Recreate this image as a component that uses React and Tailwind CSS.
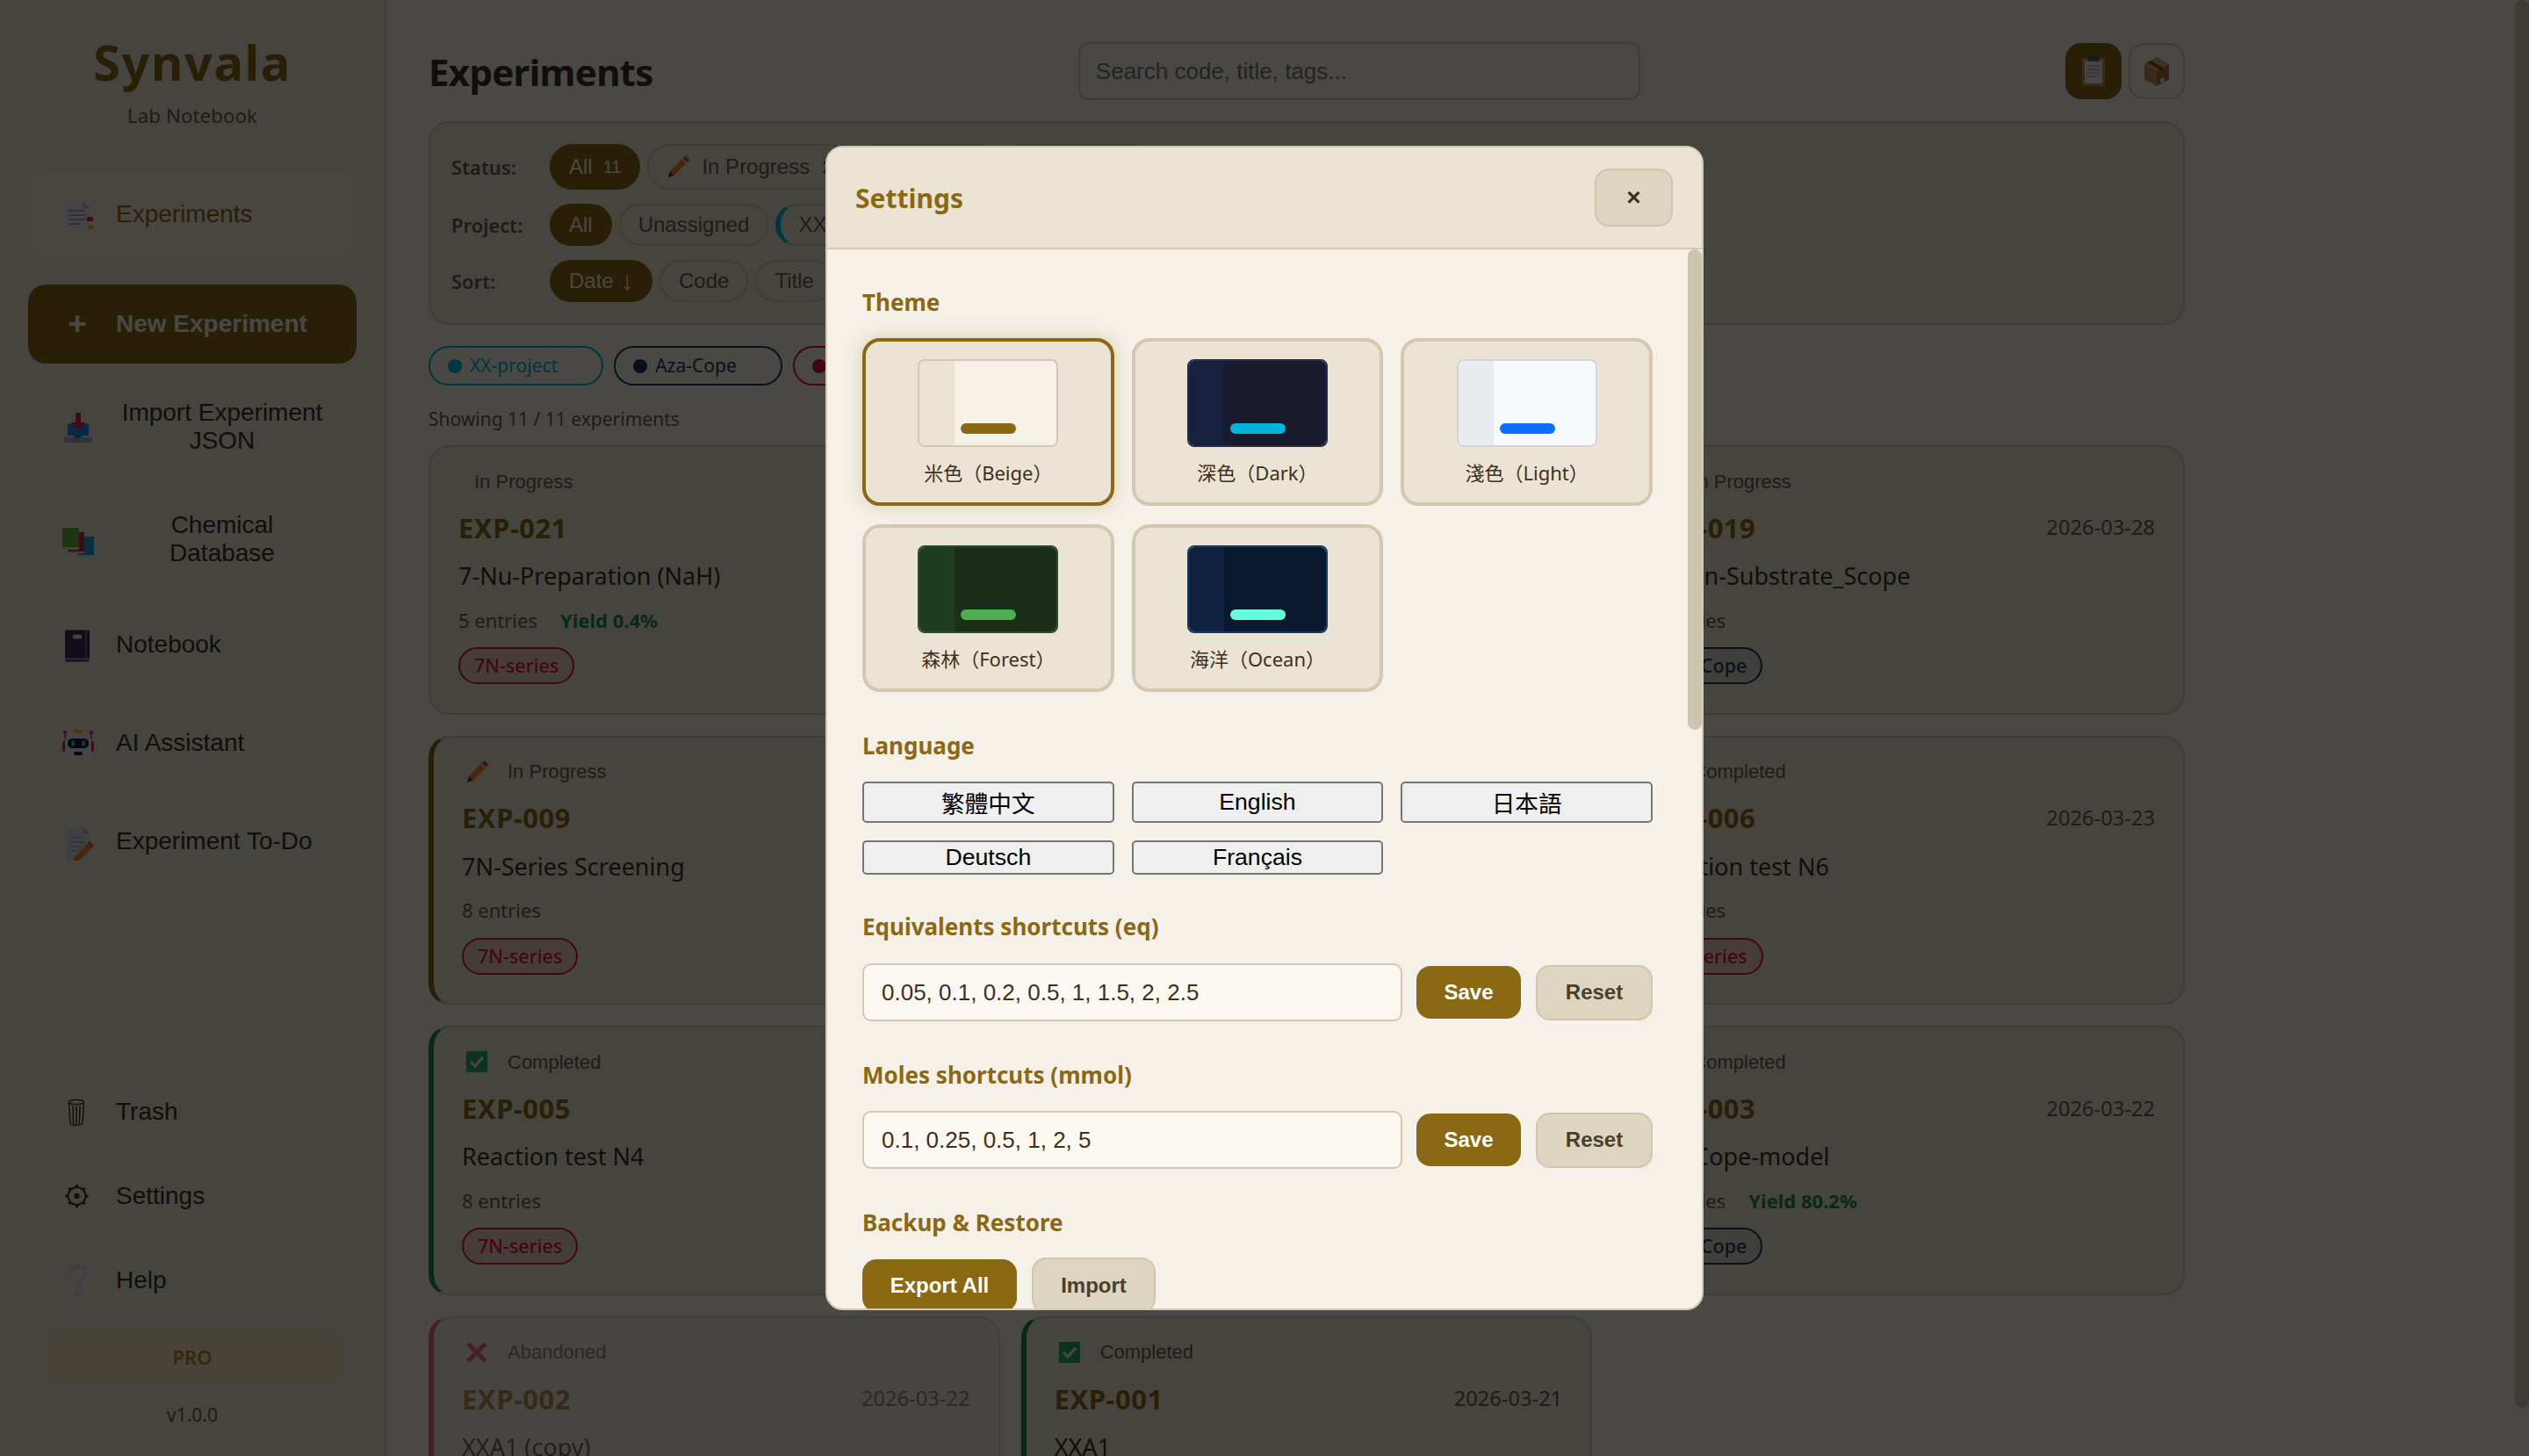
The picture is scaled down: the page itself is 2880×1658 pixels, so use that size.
import React from "react";

const arial = "[font-family:'Liberation_Sans','Noto_Sans_CJK_TC',sans-serif]";

const ExperimentsIcon = () => (
  <svg viewBox="0 0 48 48" className="w-12 h-12">
    <path d="M10 9h20l8 8v27H10z" fill="#e4e1ec" />
    <path d="M30 9l8 8h-8z" fill="#bdb9cc" />
    <path d="M14 20h18M14 25h20M14 30h20M14 35h12" stroke="#a5a2b3" strokeWidth="2" />
    <rect x="35" y="27" width="7" height="5" rx="1" fill="#e8263f" />
    <rect x="36" y="36" width="7" height="5" rx="1" fill="#f5c030" />
  </svg>
);
const ImportIcon = () => (
  <svg viewBox="0 0 48 48" className="w-12 h-12">
    <g transform="translate(1 -2)">
      <path d="M10 22h28l2 4v16a2 2 0 0 1-2 2H10a2 2 0 0 1-2-2V26z" fill="#dedbe6" />
      <path d="M8 38h32v4a2 2 0 0 1-2 2H10a2 2 0 0 1-2-2z" fill="#a9a6b8" />
      <path d="M12 23h24v13h-7l-2 3h-6l-2-3h-7z" fill="#1d8bd8" />
      <path d="M21 10h6v11h6l-9 9-9-9h6z" fill="#e2214a" />
    </g>
  </svg>
);
const BooksIcon = () => (
  <svg viewBox="0 0 48 48" className="w-12 h-12">
    <g transform="translate(-4 1)">
      <rect x="29" y="20" width="18" height="23" fill="#1e9cd8" />
      <rect x="29" y="41" width="18" height="2" fill="#bcd9ec" />
      <rect x="17" y="15" width="19" height="24" fill="#d8204e" />
      <rect x="17" y="37" width="19" height="2" fill="#f0c0cc" />
      <rect x="11" y="10" width="19" height="25" fill="#5cb83c" />
      <rect x="11" y="32" width="19" height="3" fill="#cfe6c4" />
    </g>
  </svg>
);
const NotebookIcon = () => (
  <svg viewBox="0 0 48 48" className="w-12 h-12">
    <g transform="translate(0 1.5)">
      <rect x="10" y="6" width="28" height="36" rx="2" fill="#3b2c55" />
      <rect x="10" y="38" width="28" height="2" fill="#a98cd8" />
      <rect x="33" y="6" width="1.5" height="36" fill="#7a5fa8" />
      <rect x="19" y="11" width="10" height="5" rx="1.5" fill="#dcd8e6" />
    </g>
  </svg>
);
const RobotIcon = () => (
  <svg viewBox="0 0 48 48" className="w-12 h-12">
    <g transform="translate(1 3)">
      <rect x="8.5" y="10" width="1.5" height="22" fill="#e2214a" />
      <rect x="38" y="10" width="1.5" height="22" fill="#e2214a" />
      <circle cx="9" cy="9" r="2" fill="#e2214a" />
      <circle cx="39" cy="9" r="2" fill="#e2214a" />
      <rect x="6" y="19" width="4" height="12" rx="2" fill="#e2214a" />
      <rect x="38" y="19" width="4" height="12" rx="2" fill="#e2214a" />
      <rect x="18" y="6" width="12" height="4" rx="2" fill="#f5c030" />
      <rect x="9" y="10" width="30" height="30" rx="9" fill="#e9e5ef" />
      <rect x="12" y="16" width="24" height="11" rx="5.5" fill="#1a1830" />
      <rect x="16" y="18" width="4" height="7" rx="2" fill="#29b6f6" />
      <rect x="28" y="18" width="4" height="7" rx="2" fill="#29b6f6" />
      <rect x="19" y="31" width="10" height="4" rx="2" fill="#1a1830" />
    </g>
  </svg>
);
const TodoIcon = () => (
  <svg viewBox="0 0 48 48" className="w-12 h-12">
    <g transform="translate(0 2)">
      <path d="M11 6h20l7 7v31H11z" fill="#d6d3de" />
      <path d="M31 6l7 7h-7z" fill="#b3afc0" />
      <path d="M16 18h14M16 23h16M16 28h12M16 33h8" stroke="#a5a2b3" strokeWidth="1.6" />
      <path d="M36 24l5 5-15 15h-7l2-5z" fill="#f08020" />
      <path d="M36 24l2-2 5 5-2 2z" fill="#e8404a" />
    </g>
  </svg>
);
const TrashIcon = () => (
  <svg viewBox="0 0 48 48" className="w-12 h-12" fill="none" stroke="#3d3020" strokeWidth="1.4">
    <ellipse cx="23" cy="13" rx="8.5" ry="2.6" />
    <path d="M14.5 14l1.5 23a7 2.4 0 0 0 14 0l1.5-23" />
    <path d="M19 17l.6 21M23 17.500v21M27 17l-.6 21" />
  </svg>
);
const GearIcon = () => (
  <svg viewBox="0 0 48 48" className="w-12 h-12" fill="none" stroke="#3d3020" strokeWidth="2">
    <circle cx="23.500" cy="24" r="10" />
    <circle cx="23.500" cy="24" r="2.200" fill="#3d3020" />
    <path d="M23.500 11v3M23.500 34v3M10.500 24h3M33.500 24h3M14.300 14.800l2.100 2.100M30.600 31.100l2.100 2.100M14.300 33.200l2.100-2.100M30.600 16.900l2.100-2.100" strokeWidth="3" />
  </svg>
);
const HelpIcon = () => (
  <svg viewBox="0 0 48 48" className="w-12 h-12" fill="none" stroke="#d3cfe8" strokeWidth="5" strokeLinecap="round">
    <path d="M16 14c1-4 4-6 8-6 5 0 9 3 9 8 0 6-8 7-8 14" />
    <circle cx="25" cy="39" r="1.500" fill="#d3cfe8" />
  </svg>
);
const PencilIcon = () => (
  <svg viewBox="0 0 26 26" className="w-[26px] h-[26px] shrink-0">
    <path d="M17.500 4l5 5L8.500 23 2 25l2-6.500z" fill="#f08020" />
    <path d="M18.500 3l2-2a1.500 1.500 0 0 1 2 0l3 3a1.500 1.500 0 0 1 0 2l-2 2z" fill="#e8404a" />
    <path d="M4 18.500L8 22.500 2 25z" fill="#3d3020" />
  </svg>
);
const CheckIcon = () => (
  <svg viewBox="0 0 26 26" className="w-[26px] h-[26px] shrink-0">
    <rect x="1" y="1" width="24" height="24" rx="1" fill="#2aa86b" />
    <path d="M6 13l5 5 9-10" fill="none" stroke="#e8f0ea" strokeWidth="3" />
  </svg>
);
const CrossIcon = () => (
  <svg viewBox="0 0 26 26" className="w-[26px] h-[26px] shrink-0">
    <path d="M3 3l20 20M23 3L3 23" stroke="#e2304f" strokeWidth="5" />
  </svg>
);
const ClipboardIcon = () => (
  <svg viewBox="0 0 32 36" className="w-8 h-9">
    <rect x="3" y="3" width="26" height="32" rx="1" fill="#c98a4e" />
    <rect x="6" y="6" width="20" height="26" fill="#e8e6f0" />
    <rect x="10" y="1" width="12" height="6" rx="1" fill="#55525f" />
    <path d="M9 12h14M9 16h14M9 20h14M9 24h9" stroke="#8d8a9c" strokeWidth="1.200" />
  </svg>
);
const BoxIcon = () => (
  <svg viewBox="0 0 32 36" className="w-8 h-9">
    <path d="M16 2l14 8v17l-14 8-14-8V10z" fill="#c98a4e" />
    <path d="M16 18l14-8v17l-14 8z" fill="#a9692f" />
    <path d="M16 2l14 8-14 8-14-8z" fill="#dca468" />
    <path d="M9 6l14 8v5l-4-2v-1L5 8z" fill="#7a4a20" />
    <rect x="20" y="26" width="5" height="5" fill="#e0d8cc" />
  </svg>
);

const NavItem = ({ icon, label, active }) => (
  <button
    className={`w-[374px] py-6 pl-8 pr-8 rounded-[20px] flex items-center gap-5 text-[28px] leading-8 text-center ${arial} ${
      active ? "bg-[#f3ead6] text-[#8b6914]" : "text-[#3d3020]"
    }`}
  >
    <span className="w-12 h-12 shrink-0">{icon}</span>
    <span>{label}</span>
  </button>
);

const Chip = ({ active, children, className = "", h = "h-12" }) => (
  <button
    className={`${h} shrink-0 px-5 rounded-full border-2 flex items-center text-[24px] ${arial} ${
      active ? "bg-[#8b6914] border-[#8b6914] text-[#f5f0e8]" : "border-[#d4c8b0] text-[#6b5d4a]"
    } ${className}`}
  >
    {children}
  </button>
);

const FilterRow = ({ label, children }) => (
  <div className="flex items-center">
    <span className="w-[112px] shrink-0 text-[22px] font-semibold text-[#6b5d4a]">{label}</span>
    <div className="flex items-center gap-2">{children}</div>
  </div>
);

const ProjectTag = ({ color, text, dot, label }) => (
  <div className={`h-[45px] pl-5 pr-[50px] rounded-full border-2 flex items-center gap-[9px] text-[21px] ${color} ${text}`}>
    <span className={`w-4 h-4 rounded-full ${dot}`} />
    {label}
  </div>
);

const statusIcons = { progress: <PencilIcon />, completed: <CheckIcon />, abandoned: <CrossIcon /> };
const statusLabels = { progress: "In Progress", completed: "Completed", abandoned: "Abandoned" };
const edgeColors = { progress: "border-l-[#8b6914]", completed: "border-l-[#1e8a4f]", abandoned: "border-l-[#e2304f]" };

const experiments = [
  { code: "EXP-021", date: "2026-03-30", title: "7-Nu-Preparation (NaH)", entries: 5, yieldText: "Yield 0.4%", tag: "7N-series", status: "progress", plain: true },
  { code: "EXP-020", date: "2026-03-29", title: "7N-Series Scale-up", entries: 3, tag: "7N-series", status: "progress" },
  { code: "EXP-019", date: "2026-03-28", title: "Cation-Substrate_Scope", entries: 6, tag: "Aza-Cope", status: "progress" },
  { code: "EXP-009", date: "2026-03-25", title: "7N-Series Screening", entries: 8, tag: "7N-series", status: "progress" },
  { code: "EXP-008", date: "2026-03-24", title: "Reaction test N5", entries: 8, tag: "7N-series", status: "completed" },
  { code: "EXP-006", date: "2026-03-23", title: "Reaction test N6", entries: 8, tag: "7N-series", status: "completed" },
  { code: "EXP-005", date: "2026-03-23", title: "Reaction test N4", entries: 8, tag: "7N-series", status: "completed" },
  { code: "EXP-004", date: "2026-03-22", title: "Reaction test N3", entries: 8, tag: "7N-series", status: "completed" },
  { code: "EXP-003", date: "2026-03-22", title: "Aza-Cope-model", entries: 6, yieldText: "Yield 80.2%", tag: "Aza-Cope", status: "completed" },
  { code: "EXP-002", date: "2026-03-22", title: "XXA1 (copy)", entries: 4, tag: "XX-project", status: "abandoned" },
  { code: "EXP-001", date: "2026-03-21", title: "XXA1", entries: 4, tag: "XX-project", status: "completed" },
];

const ExperimentCard = ({ exp }) => {
  const red = exp.tag === "7N-series";
  return (
    <div
      className={`h-[306.67px] bg-[#ebe4d4] border-2 border-[#d4c8b0] rounded-[24px] pr-8 pt-6 pl-8 overflow-hidden ${
        exp.plain ? "" : `border-l-[6px] ${edgeColors[exp.status]}`
      } ${exp.status === "abandoned" ? "opacity-70" : ""}`}
    >
      <div className={`h-[30px] flex items-center gap-[22px] text-[22px] text-[#6b5d4a] ${arial} ${exp.plain ? "pl-[18px]" : "pl-1"}`}>
        {!exp.plain && statusIcons[exp.status]}
        <span>{statusLabels[exp.status]}</span>
      </div>
      <div className="mt-4 h-11 flex items-center justify-between">
        <span className="text-[31px] tracking-[0.5px] font-bold text-[#8b6914]">{exp.code}</span>
        <span className="text-[23.7px] text-[#6b5d4a]">{exp.date}</span>
      </div>
      <div className="mt-[13px] text-[27px] leading-10 text-[#3d3020]">{exp.title}</div>
      <div className="mt-[13px] h-[34px] flex items-center gap-[26px] text-[22px] text-[#6b5d4a]">
        <span>{exp.entries} entries</span>
        {exp.yieldText && <span className="font-bold text-[#1e8a4f]">{exp.yieldText}</span>}
      </div>
      <div
        className={`mt-[14px] inline-flex h-[42px] items-center px-4 rounded-full border-2 text-[21.5px] font-medium ${
          red ? "border-[#dc143c] bg-[#dc143c]/10 text-[#dc143c]" : "border-[#1d3b55] bg-[#1d3b55]/10 text-[#1d3b55]"
        }`}
      >
        {exp.tag}
      </div>
    </div>
  );
};

const themes = [
  { name: "米色（Beige）", frame: "border-[#d4c8b0]", side: "bg-[#ebe4d4]", main: "bg-[#f5f0e8]", accent: "bg-[#8b6914]", active: true },
  { name: "深色（Dark）", frame: "border-[#2a2a4a]", side: "bg-[#16213e]", main: "bg-[#1a1a2e]", accent: "bg-[#00b4d8]" },
  { name: "淺色（Light）", frame: "border-[#d0d5dd]", side: "bg-[#e9ecef]", main: "bg-[#f8f9fa]", accent: "bg-[#0d6efd]" },
  { name: "森林（Forest）", frame: "border-[#2d4a2d]", side: "bg-[#1e3d1e]", main: "bg-[#1a2e1a]", accent: "bg-[#4caf50]" },
  { name: "海洋（Ocean）", frame: "border-[#1e3a5f]", side: "bg-[#112240]", main: "bg-[#0a192f]", accent: "bg-[#64ffda]" },
];

const ThemeCard = ({ theme }) => (
  <div
    className={`h-[191px] rounded-[20px] border-4 bg-[#ebe4d4] flex flex-col items-center pt-5 ${
      theme.active ? "border-[#8b6914] shadow-[0_0_20px_rgba(139,105,20,0.25)]" : "border-[#d4c8b0]"
    }`}
  >
    <div className={`relative w-[160px] h-[100px] rounded-lg border-2 overflow-hidden flex ${theme.frame}`}>
      <div className={`w-[40px] ${theme.side}`} />
      <div className={`flex-1 ${theme.main}`} />
      <div className={`absolute left-[47px] bottom-[13px] w-[63px] h-3 rounded-md ${theme.accent}`} />
    </div>
    <div className="mt-[13px] text-[22px] leading-8 text-[#3d3020]">{theme.name}</div>
  </div>
);

const SectionTitle = ({ children, className = "mb-5" }) => (
  <h3 className={`text-[26px] leading-[38px] font-bold text-[#8b6914] ${className}`}>{children}</h3>
);

const LangButton = ({ children }) => (
  <button className={`py-0.5 bg-[#efefef] border-2 border-[#767676] rounded-[5px] text-[26.67px] leading-[normal] text-black ${arial}`}>{children}</button>
);

const SaveButton = ({ children, className = "" }) => (
  <button className={`h-[60px] rounded-2xl bg-[#8b6914] text-white text-[24px] font-bold shrink-0 ${arial} ${className}`}>{children}</button>
);
const ResetButton = ({ children, className = "" }) => (
  <button className={`h-[63px] rounded-2xl bg-[#ddd5c0] border-2 border-[#d0c5ae] text-[#4a3f2f] text-[24px] font-bold shrink-0 ${arial} ${className}`}>{children}</button>
);

const ShortcutRow = ({ value }) => (
  <div className="mb-[42px] flex items-center h-[66px]">
    <input
      readOnly
      value={value}
      className={`w-[615px] h-[66px] px-5 rounded-[10px] border-2 border-[#d4c8b0] bg-[#fbf8f1] text-[#3d3020] text-[26px] outline-none ${arial}`}
    />
    <SaveButton className="ml-4 w-[119px]">Save</SaveButton>
    <ResetButton className="ml-[17px] w-[133px]">Reset</ResetButton>
  </div>
);

const SettingsModal = () => (
  <div className="absolute inset-0 bg-black/70 flex items-center justify-center">
    <div className="w-[1000px] h-[1326px] rounded-[20px] border-2 border-[#d4c8b0] bg-[#f5f0e8] flex flex-col overflow-hidden">
      <div className="h-[116px] shrink-0 pl-8 pr-[33px] flex items-center justify-between bg-[#ebe4d4] border-b-2 border-[#d4c8b0]">
        <h2 className="text-[30px] font-bold text-[#8b6914]">Settings</h2>
        <button className={`w-[89px] h-[66px] rounded-2xl bg-[#ddd5c0] border-2 border-[#d0c5ae] text-[#3d3020] text-[28px] font-bold ${arial}`}>×</button>
      </div>
      <div className="flex flex-1 min-h-0">
        <div className="flex-1 min-w-0 overflow-hidden pl-10 pr-10 pt-[41px]">
          <SectionTitle className="mb-[22px]">Theme</SectionTitle>
          <div className="grid grid-cols-3 gap-x-5 gap-y-[21px] mb-[42px]">
            {themes.map((t) => (
              <ThemeCard key={t.name} theme={t} />
            ))}
          </div>
          <SectionTitle className="mb-[22px]">Language</SectionTitle>
          <div className="grid grid-cols-3 gap-x-5 gap-y-5 mb-10">
            <LangButton>繁體中文</LangButton>
            <LangButton>English</LangButton>
            <LangButton>日本語</LangButton>
            <LangButton>Deutsch</LangButton>
            <LangButton>Français</LangButton>
          </div>
          <SectionTitle className="mb-[23px]">Equivalents shortcuts (eq)</SectionTitle>
          <ShortcutRow value="0.05, 0.1, 0.2, 0.5, 1, 1.5, 2, 2.5" />
          <SectionTitle className="mb-[22px]">Moles shortcuts (mmol)</SectionTitle>
          <ShortcutRow value="0.1, 0.25, 0.5, 1, 2, 5" />
          <SectionTitle className="mb-[21px]">Backup &amp; Restore</SectionTitle>
          <div className="flex items-center">
            <SaveButton className="w-[176px]">Export All</SaveButton>
            <ResetButton className="ml-[17px] w-[141px]">Import</ResetButton>
          </div>
        </div>
        <div className="w-4 mr-0 shrink-0">
          <div className="h-[547px] rounded-full bg-[#cfc4b0]" />
        </div>
      </div>
    </div>
  </div>
);

export default function App() {
  return (
    <div className="relative flex h-[1658px] w-[2880px] overflow-hidden bg-[#f5f0e8] text-[#3d3020] [font-family:'Noto_Sans','Noto_Sans_CJK_TC',sans-serif]">
      <aside className="w-[440px] shrink-0 h-full bg-[#ebe4d4] border-r-2 border-[#d4c8b0] flex flex-col items-center">
        <div className="pt-[32px] text-[56px] leading-[76px] font-bold tracking-[1.5px] text-[#8b6914]">Synvala</div>
        <div className="mt-[6px] text-[22.4px] leading-9 text-[#6b5d4a]">Lab Notebook</div>
        <nav className="mt-[46px] flex flex-col items-center w-full">
          <NavItem icon={<ExperimentsIcon />} label="Experiments" active />
          <button className={`mt-8 mb-4 w-[374px] h-[90px] pl-8 rounded-[20px] bg-[#8b6914] text-[#f5f0e8] flex items-center gap-5 text-[28px] font-bold ${arial}`}>
            <span className="w-12 text-center text-[36px] font-bold">+</span>
            New Experiment
          </button>
          <div className="flex flex-col gap-4">
            <NavItem icon={<ImportIcon />} label="Import Experiment JSON" />
            <NavItem icon={<BooksIcon />} label="Chemical Database" />
            <NavItem icon={<NotebookIcon />} label="Notebook" />
            <NavItem icon={<RobotIcon />} label="AI Assistant" />
            <NavItem icon={<TodoIcon />} label="Experiment To-Do" />
          </div>
        </nav>
        <div className="mt-auto flex flex-col items-center pb-8">
          <NavItem icon={<TrashIcon />} label="Trash" />
          <NavItem icon={<GearIcon />} label="Settings" />
          <NavItem icon={<HelpIcon />} label="Help" />
          <div className="mt-2 w-[342px] h-[63px] rounded-[20px] bg-[#f0e0c0] flex items-center justify-center text-[22px] font-semibold text-[#b8860b]">PRO</div>
          <div className="mt-[19px] text-[21px] leading-[30px] text-[#6b5d4a]">v1.0.0</div>
        </div>
      </aside>

      <main className="flex-1 min-w-0 pl-12 pt-12 overflow-hidden">
        <div className="w-[2000px]">
          <header className="h-[66px] flex items-center justify-between">
            <h1 className="text-[42px] tracking-[-0.7px] font-bold text-[#3d3020]">Experiments</h1>
            <input
              readOnly
              placeholder="Search code, title, tags..."
              className={`w-[640px] h-[66px] px-[18px] rounded-xl border-2 border-[#d4c8b0] bg-[#f5f0e8] text-[26px] placeholder:text-[#757575] outline-none ${arial}`}
            />
            <div className="flex gap-2">
              <button className="w-16 h-16 rounded-[18px] bg-[#8b6914] flex items-center justify-center">
                <ClipboardIcon />
              </button>
              <button className="w-16 h-16 rounded-[18px] border-2 border-[#d4c8b0] flex items-center justify-center">
                <BoxIcon />
              </button>
            </div>
          </header>

          <section className="mt-6 h-[232px] p-6 bg-[#ebe4d4] border-2 border-[#d4c8b0] rounded-[24px] flex flex-col gap-4">
            <FilterRow label="Status:">
              <Chip active h="h-[52px]">
                All<span className="ml-3 text-[20px]">11</span>
              </Chip>
              <Chip h="h-[52px]">
                <PencilIcon />
                <span className="ml-[14px]">In Progress</span>
                <span className="ml-[14px] text-[20px]">2</span>
              </Chip>
              <Chip h="h-[52px]">Completed</Chip>
              <Chip h="h-[52px]">Abandoned</Chip>
            </FilterRow>
            <FilterRow label="Project:">
              <Chip active>All</Chip>
              <Chip>Unassigned</Chip>
              <Chip className="border-l-[6px] border-l-[#00b4d8]">XX-project</Chip>
            </FilterRow>
            <FilterRow label="Sort:">
              <Chip active className="w-[117px]">
                Date<span className="ml-2 text-[30px] leading-none">↓</span>
              </Chip>
              <Chip>Code</Chip>
              <Chip>Title</Chip>
            </FilterRow>
          </section>

          <div className="mt-6 flex gap-3">
            <ProjectTag color="border-[#00b4d8]" text="text-[#00b4d8]" dot="bg-[#00b4d8]" label="XX-project" />
            <ProjectTag color="border-[#1d3b55]" text="text-[#1d3b55]" dot="bg-[#1d3b55]" label="Aza-Cope" />
            <ProjectTag color="border-[#dc143c]" text="text-[#dc143c]" dot="bg-[#dc143c]" label="7N-series" />
          </div>

          <div className="mt-[21px] text-[21px] leading-[34px] text-[#6b5d4a]">Showing 11 / 11 experiments</div>

          <div className="mt-[13px] grid grid-cols-3 gap-6">
            {experiments.map((exp) => (
              <ExperimentCard key={exp.code} exp={exp} />
            ))}
          </div>
        </div>
      </main>

      <div className="w-4 shrink-0">
        <div className="h-[1603px] rounded-full bg-[#cfc4b0]" />
      </div>

      <SettingsModal />
    </div>
  );
}
